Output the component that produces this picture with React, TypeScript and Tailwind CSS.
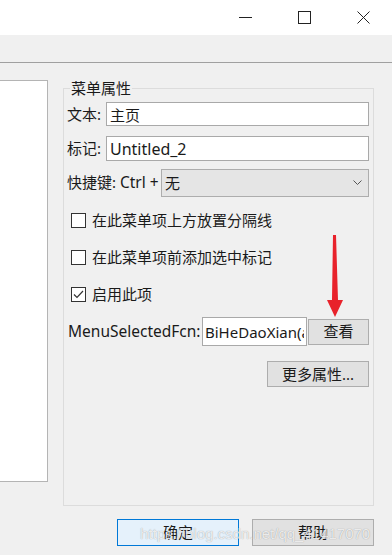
const font = { fontFamily: '"Noto Sans", "Noto Sans CJK SC", sans-serif' };

const CheckRow = ({ label, checked, className }: { label: string; checked?: boolean; className?: string }) => (
  <div className={`flex items-center pl-[7px] h-[16px] ${className ?? ""}`}>
    <span className="w-[15px] h-[15px] border border-[#333] bg-white flex items-center justify-center">
      {checked && (
        <svg width="11" height="9" viewBox="0 0 11 9" fill="none">
          <path d="M1 4.5 L4 7.5 L10 1" stroke="#333" strokeWidth="1.2" />
        </svg>
      )}
    </span>
    <span className="ml-[6px] leading-[16px]">{label}</span>
  </div>
);

const App = () => {
  return (
    <div
      className="relative w-[392px] h-[555px] overflow-hidden bg-[#f0f0f0] text-[15px] text-[#1a1a1a] flex flex-col"
      style={font}
    >
      {/* title bar */}
      <div className="h-[35px] bg-white flex items-center justify-end pr-[22px] gap-[46px] shrink-0">
        <svg width="13" height="12" viewBox="0 0 13 12">
          <path d="M0 5.5 H13" stroke="#222" strokeWidth="1" />
        </svg>
        <svg width="13" height="13" viewBox="0 0 13 13" fill="none">
          <rect x="0.5" y="0.5" width="12" height="12" stroke="#222" />
        </svg>
        <svg width="13" height="13" viewBox="0 0 13 13" fill="none">
          <path d="M0.5 0.5 L12.5 12.5 M12.5 0.5 L0.5 12.5" stroke="#222" />
        </svg>
      </div>
      {/* toolbar strip */}
      <div className="h-[28px] border-b border-[#a0a0a0] shrink-0" />

      {/* body */}
      <div className="flex items-start pt-[17px]">
        <div className="w-[48px] h-[402px] bg-white border-y border-r border-[#b4b4b4]" />
        <fieldset className="ml-[15px] w-[311px] min-w-0 h-[426px] border border-[#dcdcdc] px-0 pb-0">
          <legend className="ml-[6px] px-[1px] leading-[16px]">菜单属性</legend>

          <div className="flex items-center pl-[3px] pr-[4px] mt-[6px]">
            <span>文本:</span>
            <input
              readOnly
              value="主页"
              className="ml-auto w-[263px] h-[24px] bg-white border border-[#a9a9a9] px-[3px] outline-none"
            />
          </div>
          <div className="flex items-center pl-[3px] pr-[4px] mt-[10px]">
            <span>标记:</span>
            <input
              readOnly
              value="Untitled_2"
              className="ml-auto w-[263px] h-[25px] bg-white border border-[#a9a9a9] px-[3px] text-[16px] outline-none"
            />
          </div>
          <div className="flex items-center pl-[3px] pr-[4px] mt-[8px]">
            <span>
              快捷键: <span className="text-[15.5px]">Ctrl +</span>
            </span>
            <div className="ml-auto w-[208px] h-[28px] bg-[#e5e5e5] border border-[#adadad] flex items-center pl-[3px] pr-[6px]">
              <span className="flex-1">无</span>
              <svg width="9" height="6" viewBox="0 0 9 6" fill="none">
                <path d="M0.5 0.5 L4.5 4.5 L8.5 0.5" stroke="#555" />
              </svg>
            </div>
          </div>

          <CheckRow className="mt-[15px]" label="在此菜单项上方放置分隔线" />
          <CheckRow className="mt-[21px]" label="在此菜单项前添加选中标记" />
          <CheckRow className="mt-[21px]" label="启用此项" checked />

          <div className="flex items-center pl-[4px] pr-[4px] mt-[15px]">
            <span className="text-[15.5px] whitespace-nowrap">MenuSelectedFcn:</span>
            <input
              readOnly
              value="BiHeDaoXian(app, event)"
              className="ml-auto w-[105px] h-[29px] bg-white border border-[#a9a9a9] px-[2px] text-[15px] outline-none"
            />
            <button className="ml-[1px] w-[61px] h-[26px] shrink-0 bg-[#e1e1e1] border border-[#adadad]">查看</button>
          </div>
          <div className="flex justify-end pr-[4px] mt-[15px]">
            <button className="w-[102px] h-[26px] bg-[#e1e1e1] border border-[#adadad]">更多属性...</button>
          </div>
        </fieldset>
      </div>

      {/* dialog buttons */}
      <div className="flex justify-end gap-[13px] pr-[18px] mt-[13px]">
        <button className="w-[122px] h-[27px] bg-[#e5f1fb] border border-[#0078d7]">确定</button>
        <button className="w-[122px] h-[27px] bg-[#e1e1e1] border border-[#adadad]">帮助</button>
      </div>

      {/* red annotation arrow */}
      <svg className="absolute left-[326px] top-[234px]" width="18" height="84" viewBox="0 0 18 84">
        <polygon points="7,1 10,1 12,66 17,66 9,83 1,66 6,66" fill="#e8222b" />
      </svg>

      {/* watermark */}
      <div
        className="absolute left-[140px] top-[523px] text-[15px] text-white/80 [text-shadow:0_0_1px_rgba(0,0,0,0.4)] pointer-events-none"
        style={{ fontFamily: '"Liberation Sans", sans-serif' }}
      >
        https://blog.csdn.net/qq_41417070
      </div>
    </div>
  );
};

export default App;
